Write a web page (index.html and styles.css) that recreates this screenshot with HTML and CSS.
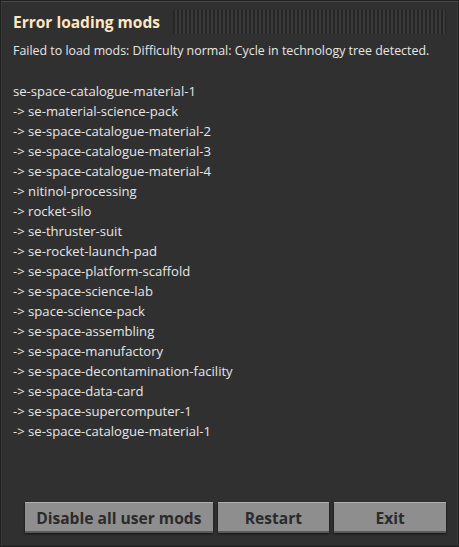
FILE: index.html
```html
<!DOCTYPE html>
<html>
<head>
<meta charset="utf-8">
<link rel="stylesheet" href="styles.css">
</head>
<body>
<div class="dialog">
  <div class="titlebar">
    <h1 class="title">Error loading mods</h1>
    <div class="filler"></div>
  </div>
  <div class="content">
    <p class="msg">Failed to load mods: Difficulty normal: Cycle in technology tree detected.</p>
    <div class="list">
      <div>se-space-catalogue-material-1</div>
      <div>-&gt; se-material-science-pack</div>
      <div>-&gt; se-space-catalogue-material-2</div>
      <div>-&gt; se-space-catalogue-material-3</div>
      <div>-&gt; se-space-catalogue-material-4</div>
      <div>-&gt; nitinol-processing</div>
      <div>-&gt; rocket-silo</div>
      <div>-&gt; se-thruster-suit</div>
      <div>-&gt; se-rocket-launch-pad</div>
      <div>-&gt; se-space-platform-scaffold</div>
      <div>-&gt; se-space-science-lab</div>
      <div>-&gt; space-science-pack</div>
      <div>-&gt; se-space-assembling</div>
      <div>-&gt; se-space-manufactory</div>
      <div>-&gt; se-space-decontamination-facility</div>
      <div>-&gt; se-space-data-card</div>
      <div>-&gt; se-space-supercomputer-1</div>
      <div>-&gt; se-space-catalogue-material-1</div>
    </div>
  </div>
  <div class="buttons">
    <button class="btn btn-wide">Disable all user mods</button>
    <button class="btn">Restart</button>
    <button class="btn">Exit</button>
  </div>
</div>
</body>
</html>
```

FILE: styles.css
```css
html, body {
  margin: 0;
  padding: 0;
  background: #313031;
}
.dialog {
  box-sizing: border-box;
  width: 459px;
  height: 547px;
  background: #313031;
  border: 1px solid #202020;
  box-shadow: inset 0 1px 0 #4a4a4a, inset 1px 0 0 #3a3a3a, inset -1px 0 0 #3a3a3a, inset 0 -1px 0 #262626;
  display: flex;
  flex-direction: column;
  font-family: "Open Sans", sans-serif;
  color: #e6e6e6;
  padding: 0 12px 0 12px;
}
.titlebar {
  display: flex;
  align-items: center;
  gap: 13px;
  height: 33px;
  padding-top: 8px;
  box-sizing: border-box;
}
.title {
  margin: 0;
  font-size: 15.5px;
  font-weight: 700;
  color: #ffe6c0;
  line-height: 22px;
}
.filler {
  flex: 1;
  height: 24px;
  background: repeating-linear-gradient(90deg, #262626 0, #262626 2px, #3a3a3a 2px, #3a3a3a 4px);
}
.content {
  flex: 1;
  padding-top: 7px;
}
.msg {
  margin: 0 0 20px 0;
  font-size: 12.4px;
  line-height: 20px;
  white-space: nowrap;
}
.list {
  font-size: 13.1px;
  line-height: 20px;
}
.buttons {
  display: flex;
  gap: 5px;
  padding: 0 0 13px 12px;
}
.btn {
  height: 31px;
  width: 112px;
  background: #8e8e8e;
  border: none;
  box-shadow: inset 0 1px 0 #b0b0b0, inset 0 -2px 0 #5a5a5a, 0 1px 2px #111;
  color: #2b2b2b;
  font-family: "Open Sans", sans-serif;
  font-weight: 700;
  font-size: 15.6px;
  padding: 0;
}
.btn-wide {
  width: 188px;
}
```
